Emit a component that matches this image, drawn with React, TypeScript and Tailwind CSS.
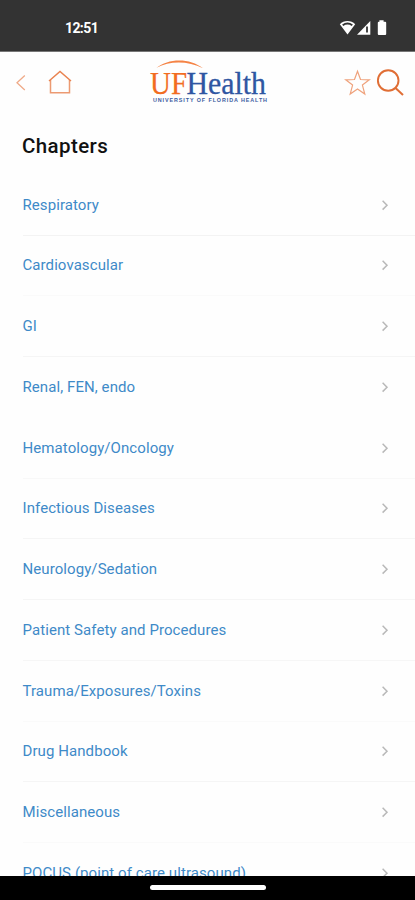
import React from "react";

type Chapter = { title: string; line: string };

const chapters: Chapter[] = [
  { title: "Respiratory", line: "border-[#f3f3f3]" },
  { title: "Cardiovascular", line: "border-[#fafafa]" },
  { title: "GI", line: "border-[#f5f5f5]" },
  { title: "Renal, FEN, endo", line: "border-[#fefefe]" },
  { title: "Hematology/Oncology", line: "border-[#f8f8f8]" },
  { title: "Infectious Diseases", line: "border-[#f5f5f5]" },
  { title: "Neurology/Sedation", line: "border-[#f5f5f5]" },
  { title: "Patient Safety and Procedures", line: "border-[#f6f6f6]" },
  { title: "Trauma/Exposures/Toxins", line: "border-[#fafafa]" },
  { title: "Drug Handbook", line: "border-[#f5f5f5]" },
  { title: "Miscellaneous", line: "border-[#fafafa]" },
  { title: "POCUS (point of care ultrasound)", line: "border-[#f5f5f5]" },
];

function StatusBar() {
  return (
    <div className="flex h-[52px] shrink-0 items-start justify-between border-b border-[#777] bg-[#333] pl-[65px] pr-7 pt-[18px] text-white">
      <span className="text-[14px] font-bold leading-5 tracking-[-0.6px]">12:51</span>
      <svg width="48" height="20" viewBox="339 18 48 20" fill="none">
        <path d="M339.8 24.2C343.8 19.8 351.2 19.8 355.2 24.2L347.5 34.5Z" fill="#fff" />
        <path d="M342.7 25.2Q347.5 21.8 352.3 25.2" stroke="#333" strokeWidth="2" />
        <path d="M357 34.8L370.3 21V34.8Z" fill="#fff" />
        <path d="M367 26.5V32.5" stroke="#333" strokeWidth="1.8" />
        <path d="M379.4 20.2H383.6V21.8H385.2Q386.2 21.8 386.2 22.8V34Q386.2 35 385.2 35H378.8Q377.8 35 377.8 34V22.8Q377.8 21.8 378.8 21.8H379.4Z" fill="#fff" />
      </svg>
    </div>
  );
}

function Logo() {
  return (
    <svg width="120" height="46" viewBox="148 58 120 46" role="img" aria-label="UFHealth">
      <path d="M156.5 67.8C168 58.2 190 57.6 203 68.3C188 60.8 170 60.8 156.5 67.8Z" fill="#f58345" />
      <text x="150" y="94" fontFamily="'Liberation Serif', serif" fontSize="31" textLength="37" lengthAdjust="spacingAndGlyphs" fill="#f26c21" stroke="#f26c21" strokeWidth=".25">UF</text>
      <text x="186.5" y="94" fontFamily="'Liberation Serif', serif" fontSize="31" textLength="79.5" lengthAdjust="spacingAndGlyphs" fill="#2f56a2" stroke="#2f56a2" strokeWidth=".3">Health</text>
      <text x="153" y="102.2" fontFamily="'Liberation Sans', sans-serif" fontWeight="700" fontSize="5.4" textLength="114" lengthAdjust="spacing" fill="#3d5da2">UNIVERSITY OF FLORIDA HEALTH</text>
    </svg>
  );
}

function NavBar() {
  return (
    <header className="grid h-[60px] shrink-0 grid-cols-[134px_192px_66px] items-start pl-[14px] pt-[6px]">
      <svg width="60" height="46" viewBox="14 58 60 46" fill="none">
        <path d="M24.8 75.5L17 82.8L24.8 90" stroke="#efaa88" strokeWidth="1.3" />
        <path d="M50.5 80V92.8H69.5V80" stroke="#ec9a72" strokeWidth="1.5" />
        <path d="M49 81L60 71.5L71 81" stroke="#e98350" strokeWidth="1.5" />
      </svg>
      <Logo />
      <svg width="66" height="46" viewBox="340 58 66 46" fill="none">
        <path d="M357.5 71.2L360.5 79.5L369.3 79.8L362.4 85.1L364.8 94L357.5 89L350.2 94L352.6 85.1L345.7 79.8L354.5 79.5Z" stroke="#efa27c" strokeWidth="1.2" />
        <circle cx="388.2" cy="80.5" r="10.3" stroke="#e06e35" strokeWidth="1.9" />
        <path d="M395.5 88L403 95" stroke="#e06e35" strokeWidth="2" />
      </svg>
    </header>
  );
}

function ChapterRow({ title, line }: Chapter) {
  return (
    <li className={`flex h-[60.75px] shrink-0 items-center justify-between border-b pr-[25px] ${line}`}>
      <span className="whitespace-nowrap text-[15px] leading-6 tracking-[0.08px] text-[#3e8ac8]">{title}</span>
      <svg width="10" height="12" viewBox="0 0 10 12" fill="none">
        <path d="M2.6 1.8L7 6.2L2.6 10.6" stroke="#b9b9b9" strokeWidth="1.5" />
      </svg>
    </li>
  );
}

export default function App() {
  return (
    <div className="flex h-[900px] w-[415px] flex-col overflow-hidden bg-[#fefefe] font-['Roboto',sans-serif]">
      <StatusBar />
      <NavBar />
      <main className="min-h-0 flex-1 overflow-hidden">
        <h1 className="flex h-[62.75px] items-center pl-[22px] pt-[5px] text-[20.5px] font-medium tracking-[0.4px] text-[#111]">Chapters</h1>
        <ul className="flex flex-col pl-[22.5px]">
          {chapters.map((chapter) => (
            <ChapterRow key={chapter.title} {...chapter} />
          ))}
        </ul>
      </main>
      <footer className="flex h-[24.5px] shrink-0 justify-center bg-black pt-[9.5px]">
        <div className="h-[5px] w-[116px] rounded-full bg-white" />
      </footer>
    </div>
  );
}
